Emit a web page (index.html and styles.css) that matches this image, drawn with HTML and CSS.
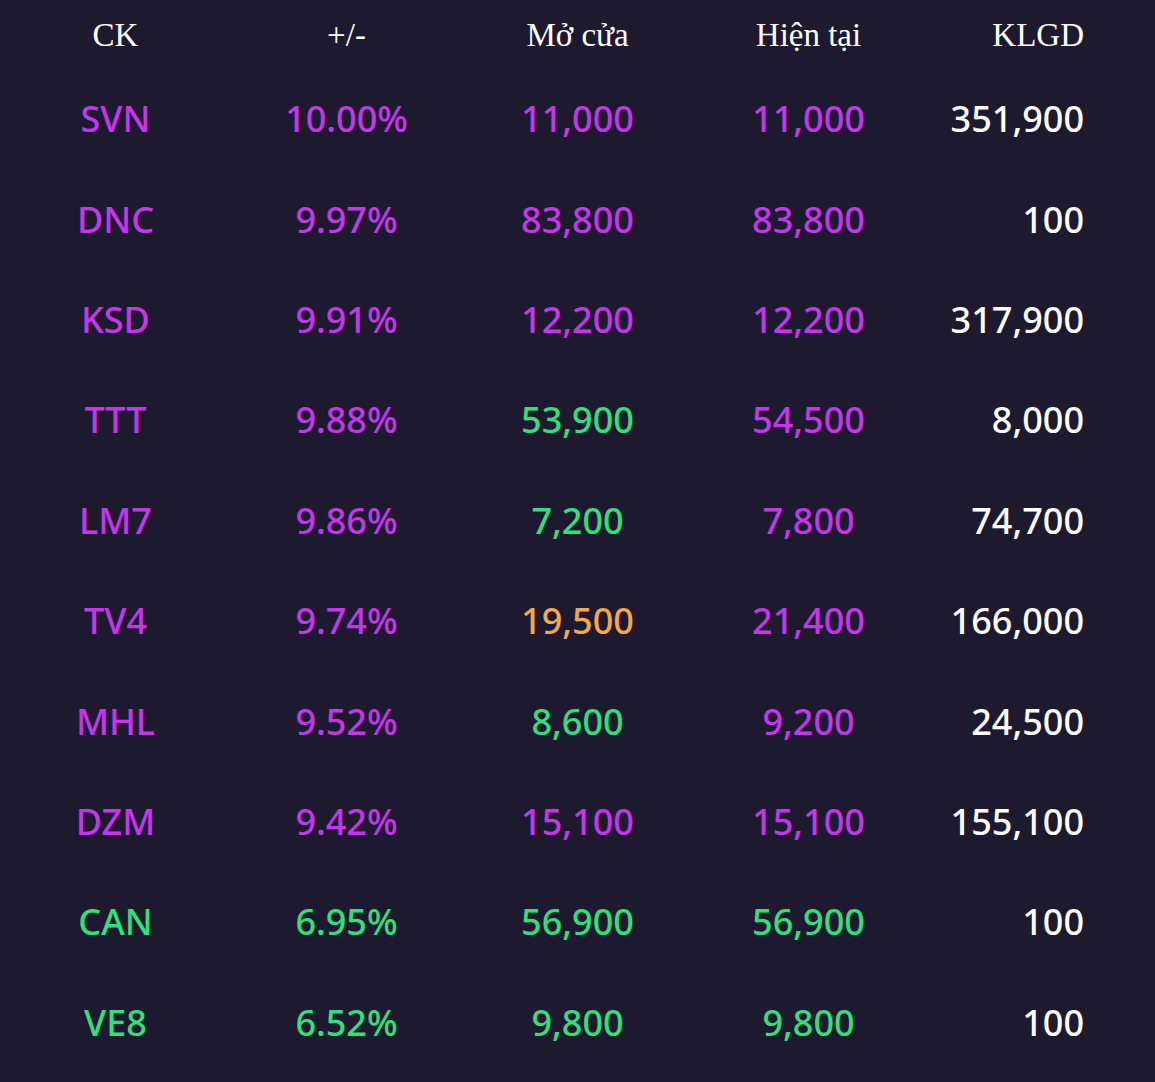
FILE: index.html
```html
<!DOCTYPE html>
<html lang="vi">
<head>
<meta charset="utf-8">
<title>Bảng giá</title>
<link rel="stylesheet" href="styles.css">
</head>
<body>
<div class="board">
  <div class="row head">
    <div class="cell">CK</div>
    <div class="cell">+/-</div>
    <div class="cell">Mở cửa</div>
    <div class="cell">Hiện tại</div>
    <div class="cell vol">KLGD</div>
  </div>
  <div class="row">
    <div class="cell ceil">SVN</div><div class="cell ceil">10.00%</div><div class="cell ceil">11,000</div><div class="cell ceil">11,000</div><div class="cell vol">351,900</div>
  </div>
  <div class="row">
    <div class="cell ceil">DNC</div><div class="cell ceil">9.97%</div><div class="cell ceil">83,800</div><div class="cell ceil">83,800</div><div class="cell vol">100</div>
  </div>
  <div class="row">
    <div class="cell ceil">KSD</div><div class="cell ceil">9.91%</div><div class="cell ceil">12,200</div><div class="cell ceil">12,200</div><div class="cell vol">317,900</div>
  </div>
  <div class="row">
    <div class="cell ceil">TTT</div><div class="cell ceil">9.88%</div><div class="cell up">53,900</div><div class="cell ceil">54,500</div><div class="cell vol">8,000</div>
  </div>
  <div class="row">
    <div class="cell ceil">LM7</div><div class="cell ceil">9.86%</div><div class="cell up">7,200</div><div class="cell ceil">7,800</div><div class="cell vol">74,700</div>
  </div>
  <div class="row">
    <div class="cell ceil">TV4</div><div class="cell ceil">9.74%</div><div class="cell ref">19,500</div><div class="cell ceil">21,400</div><div class="cell vol">166,000</div>
  </div>
  <div class="row">
    <div class="cell ceil">MHL</div><div class="cell ceil">9.52%</div><div class="cell up">8,600</div><div class="cell ceil">9,200</div><div class="cell vol">24,500</div>
  </div>
  <div class="row">
    <div class="cell ceil">DZM</div><div class="cell ceil">9.42%</div><div class="cell ceil">15,100</div><div class="cell ceil">15,100</div><div class="cell vol">155,100</div>
  </div>
  <div class="row">
    <div class="cell up">CAN</div><div class="cell up">6.95%</div><div class="cell up">56,900</div><div class="cell up">56,900</div><div class="cell vol">100</div>
  </div>
  <div class="row">
    <div class="cell up">VE8</div><div class="cell up">6.52%</div><div class="cell up">9,800</div><div class="cell up">9,800</div><div class="cell vol">100</div>
  </div>
</div>
</body>
</html>
```
FILE: styles.css
```css
html, body {
  margin: 0;
  padding: 0;
  background: #1d1a2f;
  height: 100%;
}
.board {
  width: 1155px;
  color: #ffffff;
  font-family: "Noto Sans", "Open Sans", sans-serif;
  font-weight: 500;
}
.row {
  display: grid;
  grid-template-columns: repeat(5, 231px);
  height: 100.4px;
  align-items: center;
  font-size: 36px;
  box-sizing: border-box;
}
.row.head {
  height: 69px;
  padding-top: 2px;
  font-family: "Liberation Serif", "Times New Roman", serif;
  font-weight: 400;
  font-size: 33px;
}
.cell {
  text-align: center;
  line-height: 1;
  white-space: nowrap;
}
.cell.vol {
  text-align: right;
  padding-right: 71px;
}
.ceil { color: #c735ea; }
.up { color: #30e07a; }
.ref { color: #f5a843; }
```
